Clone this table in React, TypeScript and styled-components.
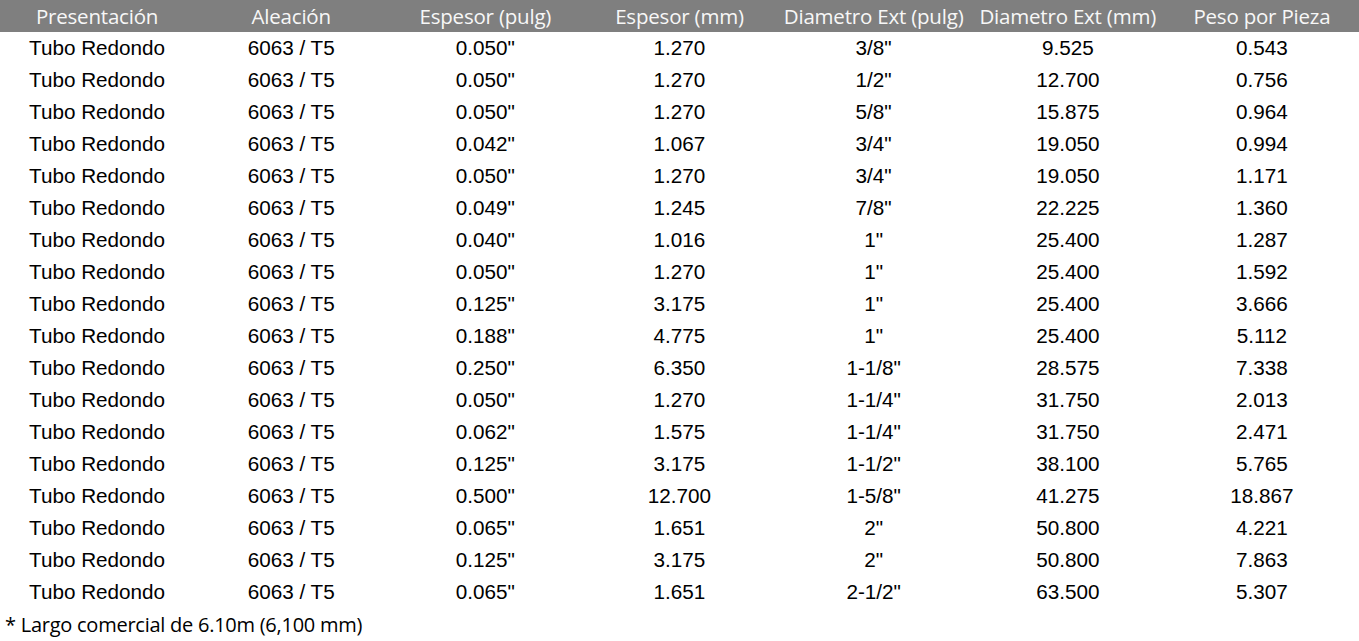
import styled, { createGlobalStyle } from "styled-components";

type Row = [string, string, string, string, string];

const GlobalStyle = createGlobalStyle`
  html, body {
    margin: 0;
    padding: 0;
    background: #ffffff;
  }
`;

const headers = [
  "Presentación",
  "Aleación",
  "Espesor (pulg)",
  "Espesor (mm)",
  "Diametro Ext (pulg)",
  "Diametro Ext (mm)",
  "Peso por Pieza",
];

// espesor pulg, espesor mm, diametro pulg, diametro mm, peso
const rows: Row[] = [
  ['0.050"', "1.270", '3/8"', "9.525", "0.543"],
  ['0.050"', "1.270", '1/2"', "12.700", "0.756"],
  ['0.050"', "1.270", '5/8"', "15.875", "0.964"],
  ['0.042"', "1.067", '3/4"', "19.050", "0.994"],
  ['0.050"', "1.270", '3/4"', "19.050", "1.171"],
  ['0.049"', "1.245", '7/8"', "22.225", "1.360"],
  ['0.040"', "1.016", '1"', "25.400", "1.287"],
  ['0.050"', "1.270", '1"', "25.400", "1.592"],
  ['0.125"', "3.175", '1"', "25.400", "3.666"],
  ['0.188"', "4.775", '1"', "25.400", "5.112"],
  ['0.250"', "6.350", '1-1/8"', "28.575", "7.338"],
  ['0.050"', "1.270", '1-1/4"', "31.750", "2.013"],
  ['0.062"', "1.575", '1-1/4"', "31.750", "2.471"],
  ['0.125"', "3.175", '1-1/2"', "38.100", "5.765"],
  ['0.500"', "12.700", '1-5/8"', "41.275", "18.867"],
  ['0.065"', "1.651", '2"', "50.800", "4.221"],
  ['0.125"', "3.175", '2"', "50.800", "7.863"],
  ['0.065"', "1.651", '2-1/2"', "63.500", "5.307"],
];

const Sheet = styled.div`
  width: 1359px;
  display: flex;
  flex-direction: column;
`;

const Grid = styled.div`
  display: grid;
  grid-template-columns: repeat(7, 1fr);
`;

const HeaderRow = styled(Grid)`
  height: 32px;
  background: #7f7f7f;
`;

const HeaderCell = styled.div`
  display: flex;
  align-items: center;
  justify-content: center;
  font-family: "Open Sans", "Noto Sans", sans-serif;
  font-size: 20.5px;
  letter-spacing: -0.2px;
  color: #f7f7f7;
  white-space: nowrap;
`;

const DataRow = styled(Grid)`
  height: 32px;
`;

const DataCell = styled.div`
  display: flex;
  align-items: center;
  justify-content: center;
  font-family: "Liberation Sans", Arial, sans-serif;
  font-size: 20.7px;
  color: #000000;
  white-space: nowrap;
`;

const Note = styled.div`
  height: 32px;
  display: flex;
  align-items: center;
  padding-left: 5px;
  font-family: "Open Sans", "Noto Sans", sans-serif;
  font-size: 20px;
  letter-spacing: -0.25px;
  color: #000000;
`;

const App = () => {
  return (
    <>
      <GlobalStyle />
      <Sheet>
        <HeaderRow>
          {headers.map((h) => (
            <HeaderCell key={h}>{h}</HeaderCell>
          ))}
        </HeaderRow>
        {rows.map((row, i) => (
          <DataRow key={i}>
            <DataCell>Tubo Redondo</DataCell>
            <DataCell>6063 / T5</DataCell>
            {row.map((value, j) => (
              <DataCell key={j}>{value}</DataCell>
            ))}
          </DataRow>
        ))}
        <Note>* Largo comercial de 6.10m (6,100 mm)</Note>
      </Sheet>
    </>
  );
};

export default App;
